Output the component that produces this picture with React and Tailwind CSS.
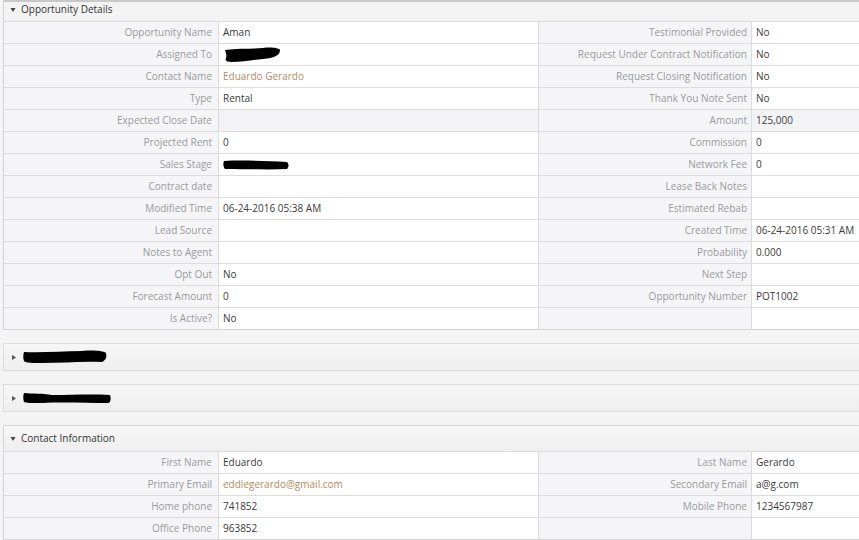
import React from "react";

// rows of the opportunity block: [label, value, label, value]
const oppRows = [
  ["Opportunity Name", "Aman", "Testimonial Provided", "No"],
  ["Assigned To", "@scribble1", "Request Under Contract Notification", "No"],
  ["Contact Name", "@link:Eduardo Gerardo", "Request Closing Notification", "No"],
  ["Type", "Rental", "Thank You Note Sent", "No"],
  ["Expected Close Date", "", "Amount", "125,000", true],
  ["Projected Rent", "0", "Commission", "0"],
  ["Sales Stage", "@scribble2", "Network Fee", "0"],
  ["Contract date", "", "Lease Back Notes", ""],
  ["Modified Time", "06-24-2016 05:38 AM", "Estimated Rebab", ""],
  ["Lead Source", "", "Created Time", "06-24-2016 05:31 AM"],
  ["Notes to Agent", "", "Probability", "0.000"],
  ["Opt Out", "No", "Next Step", ""],
  ["Forecast Amount", "0", "Opportunity Number", "POT1002"],
  ["Is Active?", "No", "", ""],
];

const contactRows = [
  ["First Name", "Eduardo", "Last Name", "Gerardo"],
  ["Primary Email", "@link:eddiegerardo@gmail.com", "Secondary Email", "a@g.com"],
  ["Home phone", "741852", "Mobile Phone", "1234567987"],
  ["Office Phone", "963852", "", ""],
];

const Scribble = ({ w, h, d }) => (
  <svg width={w} height={h} viewBox={`0 0 ${w} ${h}`} className="block">
    <path d={d} fill="#000" />
  </svg>
);

const Caret = ({ open }) => (
  <svg width="6" height="7" viewBox="0 0 6 7" className="shrink-0">
    {open ? <path d="M0.5 2 L5.5 2 L3 6 Z" fill="#444" /> : <path d="M1 1 L5 3.5 L1 6 Z" fill="#555" />}
  </svg>
);

const Value = ({ v }) => {
  if (v === "@scribble1")
    return (
      <Scribble w={58} h={16} d="M2 3 C15 1 30 2 40 1 C48 0 56 1 57 3 C57 8 52 11 40 12 C30 13 20 15 8 15 C3 15 2 13 3 11 C4 9 3 6 2 3 Z" />
    );
  if (v === "@scribble2")
    return (
      <Scribble w={66} h={12} d="M1 2 C20 1 40 2 64 3 C66 5 66 8 64 10 C45 11 25 10 2 10 C0 8 0 4 1 2 Z" />
    );
  if (v.startsWith("@link:")) return <span className="text-[#b88b5c]">{v.slice(6)}</span>;
  return <span className="text-[#3a3a3a]">{v}</span>;
};

const Grid = ({ rows }) => (
  <div>
    {rows.map((r, i) => (
      <div
        key={i}
        className={`grid grid-cols-[214px_320px_213px_1fr] h-[22px] border-t border-[#dcdcdc] ${r[4] ? "bg-[#f3f3f5]" : ""}`}
      >
        <div className="bg-[#f5f5f7] text-[#9a9a9e] text-right pr-[6px] flex items-center justify-end">{r[0]}</div>
        <div className={`${r[4] ? "bg-[#f3f3f5]" : "bg-white"} border-l border-[#dcdcdc] pl-[4px] flex items-center`}>
          <Value v={r[1]} />
        </div>
        <div className="bg-[#f5f5f7] border-l border-[#dcdcdc] text-[#9a9a9e] text-right pr-[4px] flex items-center justify-end">
          {r[2]}
        </div>
        <div className={`${r[4] ? "bg-[#f3f3f5]" : "bg-white"} border-l border-[#dcdcdc] pl-[4px] flex items-center`}>
          <Value v={r[3]} />
        </div>
      </div>
    ))}
  </div>
);

const Collapsed = ({ d, w }) => (
  <div className="mt-[13px] border border-[#dcdcdc] bg-[linear-gradient(#f6f6f7,#efeff0)] h-[28px] flex items-center pl-[7px] gap-[5px]">
    <Caret />
    <Scribble w={w} h={14} d={d} />
  </div>
);

export default function App() {
  return (
    <div className="w-[859px] h-[540px] overflow-hidden bg-[#f4f4f4] font-['Open_Sans',sans-serif] text-[10px]">
      <div className="ml-[3px] w-[870px]">
        {/* Opportunity Details */}
        <div className="border border-[#d4d4d4] border-t-[#c8c8c8] border-t-2">
          <div className="h-[19px] bg-[#f3f3f4] flex items-start pl-[6px] gap-[5px] text-[#333]">
            <span className="h-[14px] flex items-center">
              <Caret open />
            </span>
            <span className="leading-[14px]">Opportunity Details</span>
          </div>
          <Grid rows={oppRows} />
        </div>

        <Collapsed
          w={86}
          d="M2 2 C20 3 40 1 60 1 C72 0 82 1 84 3 C85 7 84 10 80 12 C60 11 40 13 20 13 C10 13 4 13 2 11 C1 8 1 5 2 2 Z"
        />
        <Collapsed
          w={90}
          d="M2 2 C10 3 20 2 30 4 C50 4 70 3 88 4 C89 7 89 10 87 12 C65 12 40 11 20 12 C10 12 4 12 2 11 C1 8 1 5 2 2 Z"
        />

        {/* Contact Information */}
        <div className="mt-[13px] border border-[#d4d4d4]">
          <div className="h-[25px] bg-[linear-gradient(#f6f6f7,#efeff0)] flex items-center pl-[6px] gap-[5px] text-[#333]">
            <Caret open />
            <span>Contact Information</span>
          </div>
          <Grid rows={contactRows} />
        </div>
      </div>
    </div>
  );
}
